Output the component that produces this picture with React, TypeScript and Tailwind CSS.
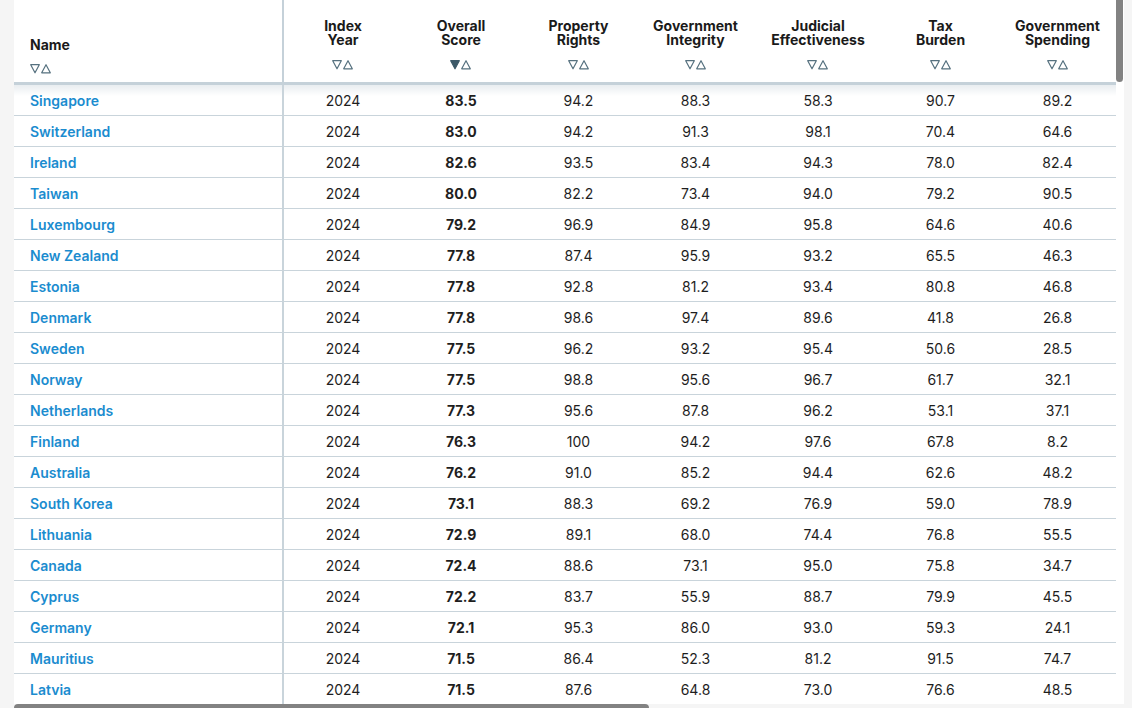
import React from 'react';

type Country = [string, string, string, string, string, string, string];

// name, overall, property rights, gov integrity, judicial, tax burden, gov spending
const countries: Country[] = [
  ['Singapore', '83.5', '94.2', '88.3', '58.3', '90.7', '89.2'],
  ['Switzerland', '83.0', '94.2', '91.3', '98.1', '70.4', '64.6'],
  ['Ireland', '82.6', '93.5', '83.4', '94.3', '78.0', '82.4'],
  ['Taiwan', '80.0', '82.2', '73.4', '94.0', '79.2', '90.5'],
  ['Luxembourg', '79.2', '96.9', '84.9', '95.8', '64.6', '40.6'],
  ['New Zealand', '77.8', '87.4', '95.9', '93.2', '65.5', '46.3'],
  ['Estonia', '77.8', '92.8', '81.2', '93.4', '80.8', '46.8'],
  ['Denmark', '77.8', '98.6', '97.4', '89.6', '41.8', '26.8'],
  ['Sweden', '77.5', '96.2', '93.2', '95.4', '50.6', '28.5'],
  ['Norway', '77.5', '98.8', '95.6', '96.7', '61.7', '32.1'],
  ['Netherlands', '77.3', '95.6', '87.8', '96.2', '53.1', '37.1'],
  ['Finland', '76.3', '100', '94.2', '97.6', '67.8', '8.2'],
  ['Australia', '76.2', '91.0', '85.2', '94.4', '62.6', '48.2'],
  ['South Korea', '73.1', '88.3', '69.2', '76.9', '59.0', '78.9'],
  ['Lithuania', '72.9', '89.1', '68.0', '74.4', '76.8', '55.5'],
  ['Canada', '72.4', '88.6', '73.1', '95.0', '75.8', '34.7'],
  ['Cyprus', '72.2', '83.7', '55.9', '88.7', '79.9', '45.5'],
  ['Germany', '72.1', '95.3', '86.0', '93.0', '59.3', '24.1'],
  ['Mauritius', '71.5', '86.4', '52.3', '81.2', '91.5', '74.7'],
  ['Latvia', '71.5', '87.6', '64.8', '73.0', '76.6', '48.5'],
];

const columns = [
  { label: 'Index Year', w: 'w-[118px]' },
  { label: 'Overall Score', w: 'w-[118px]', active: true },
  { label: 'Property Rights', w: 'w-[117px]' },
  { label: 'Government Integrity', w: 'w-[117px]' },
  { label: 'Judicial Effectiveness', w: 'w-[128px]' },
  { label: 'Tax Burden', w: 'w-[117px]' },
  { label: 'Government Spending', w: 'w-[117px]' },
];

function SortIcon({ active }: { active?: boolean }) {
  return (
    <svg width="22" height="10" viewBox="0 0 22 10" className="block">
      <polygon
        points="0.7,0.7 9.3,0.7 5,8.8"
        fill={active ? '#3d5968' : 'none'}
        stroke={active ? '#3d5968' : '#56717f'}
        strokeWidth="1.2"
        strokeLinejoin="round"
      />
      <polygon
        points="11.7,8.8 20.3,8.8 16,0.7"
        fill="none"
        stroke="#56717f"
        strokeWidth="1.2"
        strokeLinejoin="round"
      />
    </svg>
  );
}

const shade = 'bg-[linear-gradient(to_bottom,#e9edf0_0px,#ffffff_11px)]';

export default function App() {
  return (
    <div className="flex h-[708px] flex-col overflow-hidden bg-[#f5f5f5] pl-[14px] pr-[8px] font-['Inter',sans-serif]">
      <div className="flex h-[704px] shrink-0">
        <div className="w-[1102px] overflow-hidden bg-white">
          <table className="w-[1102px] table-fixed border-separate border-spacing-0 text-[14px] text-[#1e1e1e]">
            <thead>
              <tr>
                <th className="h-[85px] w-[270px] border-b-[3px] border-r-2 border-[#c5d1d9] bg-white pb-[8px] pl-4 text-left align-bottom">
                  <div className="text-[14px] font-bold leading-[14px] text-[#1a1a1a]">Name</div>
                  <div className="mt-[12px]">
                    <SortIcon />
                  </div>
                </th>
                {columns.map((c) => (
                  <th
                    key={c.label}
                    className={`h-[85px] ${c.w} border-b-[3px] border-[#c5d1d9] bg-white pb-[12px] align-bottom`}
                  >
                    <div className="flex flex-col items-center text-[14px] font-bold leading-[14px] text-[#1a1a1a]">
                      {c.label.split(' ').map((part) => (
                        <span key={part}>{part}</span>
                      ))}
                    </div>
                    <div className="mt-[13px] flex justify-center">
                      <SortIcon active={c.active} />
                    </div>
                  </th>
                ))}
              </tr>
            </thead>
            <tbody>
              {countries.map(([name, overall, ...rest], r) => {
                const bg = r === 0 ? shade : 'bg-white';
                return (
                  <tr key={name} className="h-[31px]">
                    <td className={`border-b border-r-2 border-[#c9d4db] pl-4 font-semibold text-[#1b8ccf] ${bg}`}>
                      {name}
                    </td>
                    <td className={`border-b border-[#c9d4db] text-center ${bg}`}>2024</td>
                    <td className={`border-b border-[#c9d4db] text-center font-bold ${bg}`}>{overall}</td>
                    {rest.map((v, i) => (
                      <td key={i} className={`border-b border-[#c9d4db] text-center ${bg}`}>
                        {v}
                      </td>
                    ))}
                  </tr>
                );
              })}
              <tr className="h-[40px]">
                <td className="border-r-2 border-[#c9d4db]" />
                <td colSpan={columns.length} />
              </tr>
            </tbody>
          </table>
        </div>
        {/* vertical scrollbar */}
        <div className="w-2 shrink-0 bg-white">
          <div className="h-[82px] w-[7px] rounded-b-[4px] bg-[#828282]" />
        </div>
      </div>
      {/* horizontal scrollbar */}
      <div className="h-2 shrink-0">
        <div className="h-2 w-[635px] rounded-[4px] bg-[#828282]" />
      </div>
    </div>
  );
}
